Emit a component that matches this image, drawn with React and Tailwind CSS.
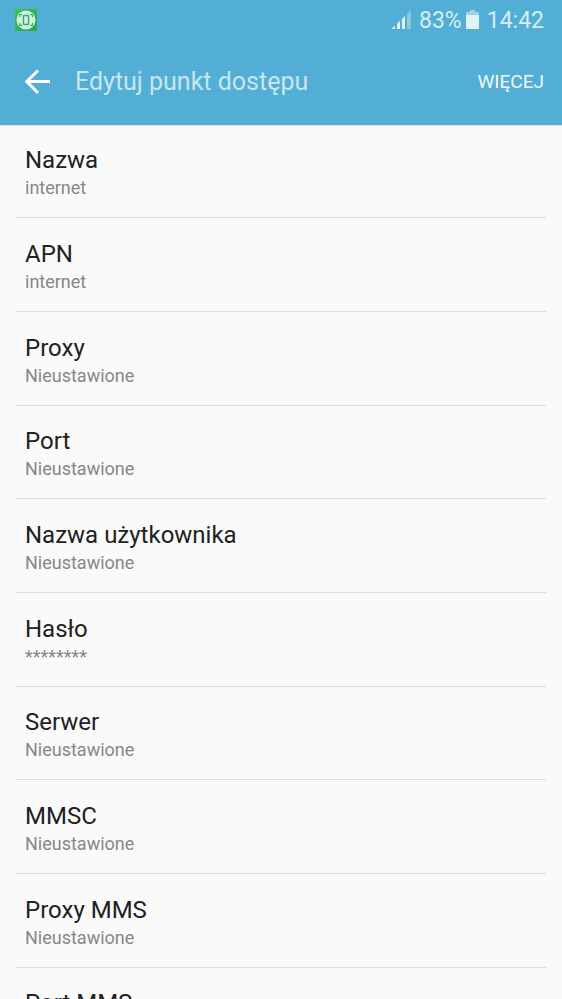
const settings = [
  { title: "Nazwa", value: "internet" },
  { title: "APN", value: "internet" },
  { title: "Proxy", value: "Nieustawione" },
  { title: "Port", value: "Nieustawione" },
  { title: "Nazwa użytkownika", value: "Nieustawione" },
  { title: "Hasło", value: "********" },
  { title: "Serwer", value: "Nieustawione" },
  { title: "MMSC", value: "Nieustawione" },
  { title: "Proxy MMS", value: "Nieustawione" },
  { title: "Port MMS", value: "Nieustawione" },
];

function AppBadge() {
  return (
    <svg width="22" height="22" viewBox="0 0 22 22" aria-hidden="true">
      <defs>
        <linearGradient id="badge" x1="0" y1="0" x2="1" y2="1">
          <stop offset="0" stopColor="#3cc653" />
          <stop offset="1" stopColor="#22a94c" />
        </linearGradient>
      </defs>
      <rect width="22" height="22" rx="2" fill="url(#badge)" />
      <circle cx="11" cy="11" r="9.5" fill="#d3efdf" />
      <g fill="none" stroke="#35ae62">
        <rect x="8.5" y="6.500" width="5" height="9" rx="0.6" strokeWidth="1.4" />
        <path d="M4.7 8V5.6H7M15.2 5.6h2.3V8M4.7 14v2.4H7M15.2 16.4h2.3V14" strokeWidth="1.1" />
      </g>
    </svg>
  );
}

function SignalIcon() {
  return (
    <svg width="20" height="20" viewBox="0 0 20 20" aria-hidden="true">
      <g fill="#e3f2f8">
        <path d="M0 19v-.8L3 15.500V19z" />
        <path d="M5 19v-5.200L8 10.800V19z" />
        <path d="M10 19V9l3-3V19z" />
      </g>
      <path d="M15 19V4L18.700 0.300V19z" fill="#8fcae2" />
    </svg>
  );
}

function BatteryIcon() {
  return (
    <svg width="13" height="20" viewBox="0 0 13 20" aria-hidden="true">
      <path d="M4 0h5v2h4v3H0V2h4z" fill="#9bd0e5" />
      <path d="M0 5h13v14H0z" fill="#e3f2f8" />
    </svg>
  );
}

function StatusBar() {
  return (
    <div className="flex h-10 items-center justify-between pr-[18px] pl-[15px]">
      <AppBadge />
      <div className="flex items-center text-[23px] leading-10 text-[#d6edf6]">
        <SignalIcon />
        <span className="ml-[7px] pt-px">83%</span>
        <span className="ml-1 flex">
          <BatteryIcon />
        </span>
        <span className="ml-2 pt-px">14:42</span>
      </div>
    </div>
  );
}

function BackIcon() {
  return (
    <svg width="26" height="26" viewBox="0 0 26 26" fill="none" stroke="#fff" strokeWidth="3" aria-hidden="true">
      <path d="M14 1.500L2.800 12.500l11.200 11.500M2.800 12.500H26" />
    </svg>
  );
}

export default function App() {
  return (
    <div className="flex h-screen flex-col overflow-hidden bg-[#fafafa] font-[Roboto,sans-serif]">
      <header className="z-10 h-[125px] shrink-0 bg-[#52aed4] shadow-[0_1px_0_#dfe3e5]">
        <StatusBar />
        <div className="flex h-[84px] items-center pr-[18px] pl-6">
          <button type="button" aria-label="Wstecz">
            <BackIcon />
          </button>
          <h1 className="ml-[25px] flex-1 text-[25px] leading-9 text-[#c8e5f1]">Edytuj punkt dostępu</h1>
          <button type="button" className="text-[19px] text-[#f0f8fc]">
            WIĘCEJ
          </button>
        </div>
      </header>
      <main className="min-h-0 flex-1 overflow-hidden">
        <ul className="px-4">
          {settings.map((item) => (
            <li
              key={item.title}
              className="h-[94px] border-b border-[#dcdcdc] pt-5 nth-[3n+1]:h-[93px] nth-[3n+1]:pt-[19px]"
            >
              <button type="button" className="flex w-full flex-col px-[9px] text-left">
                <span className="text-2xl leading-8 text-[#212121]">{item.title}</span>
                <span className="text-lg leading-6 text-[#868789]">{item.value}</span>
              </button>
            </li>
          ))}
        </ul>
      </main>
    </div>
  );
}
